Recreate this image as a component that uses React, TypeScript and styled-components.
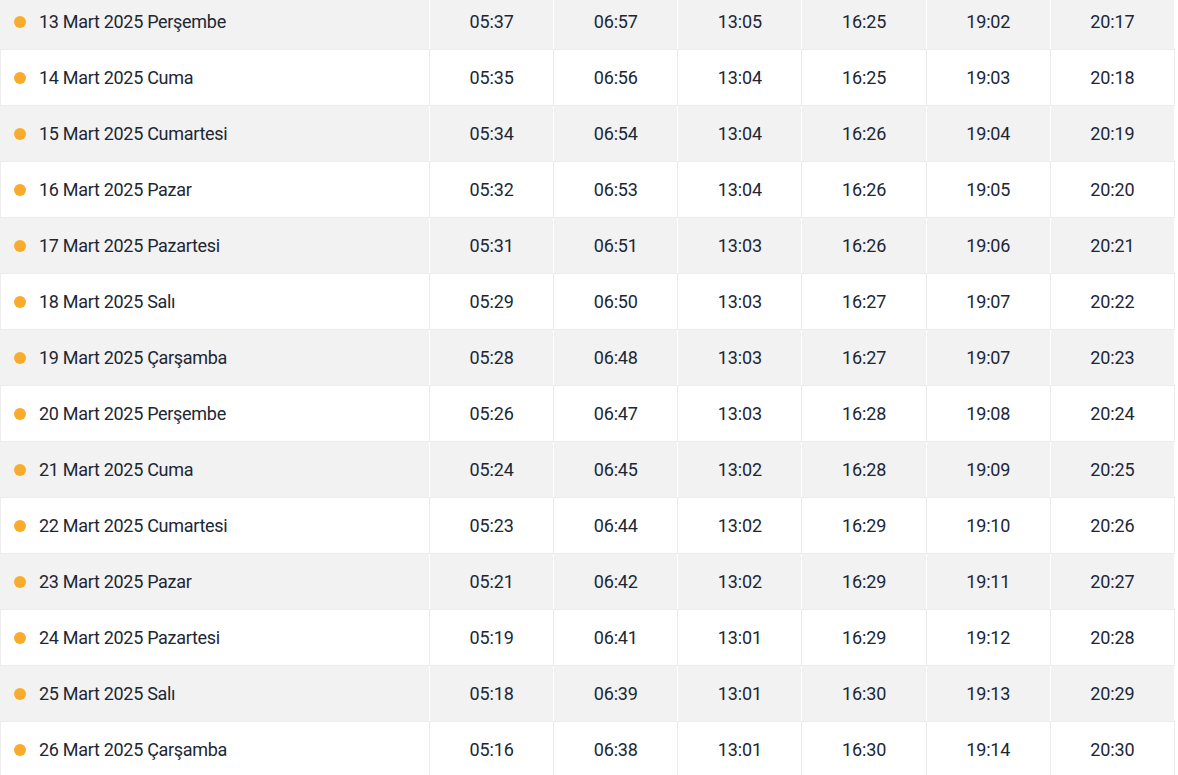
import React from "react";
import styled, { createGlobalStyle } from "styled-components";

const Global = createGlobalStyle`
  html, body { margin: 0; padding: 0; background: #fff; }
  body { font-family: Roboto, "Noto Sans", Arial, sans-serif; overflow: hidden; }
`;

const Table = styled.div`
  width: 1175px;
  margin-top: -6px;
  display: flex;
  flex-direction: column;
`;

const Row = styled.div<{ $alt: boolean }>`
  display: grid;
  grid-template-columns: 429px repeat(6, 1fr);
  height: 56px;
  background: ${(p) => (p.$alt ? "#f2f2f2" : "#ffffff")};
  border-left: 1px solid ${(p) => (p.$alt ? "#f2f2f2" : "#ededed")};
  box-sizing: border-box;
  border-bottom: 1px solid #ececec;
`;

const Cell = styled.div<{ $alt: boolean }>`
  display: flex;
  align-items: center;
  justify-content: center;
  border-right: 1px solid ${(p) => (p.$alt ? "#ffffff" : "#ececec")};
  font-size: 18px;
  letter-spacing: -0.15px;
  color: #1c2733;
  box-sizing: border-box;
`;

const DateCell = styled(Cell)`
  justify-content: flex-start;
  padding-left: 13px;
  gap: 13px;
  letter-spacing: -0.3px;
`;

const Dot = styled.span`
  width: 12px;
  height: 12px;
  border-radius: 50%;
  background: #fbab2b;
  flex: none;
`;

const rows: [string, string[]][] = [
  ["13 Mart 2025 Perşembe", ["05:37", "06:57", "13:05", "16:25", "19:02", "20:17"]],
  ["14 Mart 2025 Cuma", ["05:35", "06:56", "13:04", "16:25", "19:03", "20:18"]],
  ["15 Mart 2025 Cumartesi", ["05:34", "06:54", "13:04", "16:26", "19:04", "20:19"]],
  ["16 Mart 2025 Pazar", ["05:32", "06:53", "13:04", "16:26", "19:05", "20:20"]],
  ["17 Mart 2025 Pazartesi", ["05:31", "06:51", "13:03", "16:26", "19:06", "20:21"]],
  ["18 Mart 2025 Salı", ["05:29", "06:50", "13:03", "16:27", "19:07", "20:22"]],
  ["19 Mart 2025 Çarşamba", ["05:28", "06:48", "13:03", "16:27", "19:07", "20:23"]],
  ["20 Mart 2025 Perşembe", ["05:26", "06:47", "13:03", "16:28", "19:08", "20:24"]],
  ["21 Mart 2025 Cuma", ["05:24", "06:45", "13:02", "16:28", "19:09", "20:25"]],
  ["22 Mart 2025 Cumartesi", ["05:23", "06:44", "13:02", "16:29", "19:10", "20:26"]],
  ["23 Mart 2025 Pazar", ["05:21", "06:42", "13:02", "16:29", "19:11", "20:27"]],
  ["24 Mart 2025 Pazartesi", ["05:19", "06:41", "13:01", "16:29", "19:12", "20:28"]],
  ["25 Mart 2025 Salı", ["05:18", "06:39", "13:01", "16:30", "19:13", "20:29"]],
  ["26 Mart 2025 Çarşamba", ["05:16", "06:38", "13:01", "16:30", "19:14", "20:30"]],
];

export default function App() {
  return (
    <>
      <Global />
      <Table>
        {rows.map(([date, times], i) => {
          const alt = i % 2 === 0;
          return (
            <Row key={date} $alt={alt}>
              <DateCell $alt={alt}>
                <Dot />
                {date}
              </DateCell>
              {times.map((t, j) => (
                <Cell key={j} $alt={alt}>
                  {t}
                </Cell>
              ))}
            </Row>
          );
        })}
      </Table>
    </>
  );
}
